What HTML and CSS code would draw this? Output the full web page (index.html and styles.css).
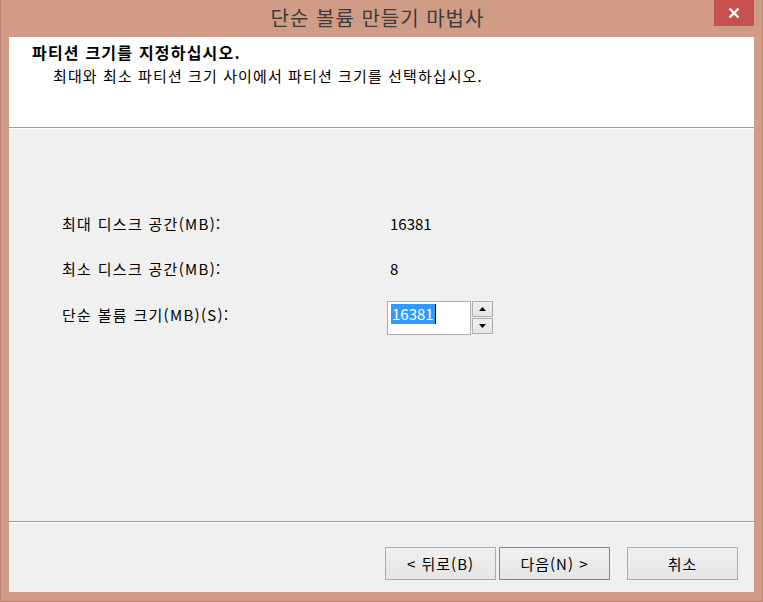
FILE: index.html
```html
<!DOCTYPE html>
<html lang="ko">
  <head>
    <meta charset="UTF-8" />
    <title>단순 볼륨 만들기 마법사</title>
    <link rel="stylesheet" href="styles.css">
  </head>
  <body>
    <div class="window">
      <div class="titlebar">
        <span></span>
        <h1 class="title">단순 볼륨 만들기 마법사</h1>
        <button class="close" aria-label="닫기">
          <svg width="12" height="12" viewBox="0 0 12 12">
            <path d="M1.5 1.5 L10.5 10.5 M10.5 1.5 L1.5 10.5" stroke="#fff" stroke-width="2.4" fill="none"/>
          </svg>
        </button>
      </div>

      <div class="client">
        <div class="header">
          <h2>파티션 크기를 지정하십시오.</h2>
          <p>최대와 최소 파티션 크기 사이에서 파티션 크기를 선택하십시오.</p>
        </div>

        <div class="content">
          <div class="fields">
            <span class="label">최대 디스크 공간(MB):</span>
            <span class="value">16381</span>

            <span class="label">최소 디스크 공간(MB):</span>
            <span class="value">8</span>

            <label class="label label-top" for="size">단순 볼륨 크기(MB)(S):</label>
            <div class="spinner">
              <div class="spin-text" id="size"><span class="selected">16381</span><span class="caret"></span></div>
              <div class="spin-buttons">
                <button class="spin-btn" aria-label="증가">
                  <svg width="7" height="4" viewBox="0 0 7 4"><path d="M0 4 L3.5 0 L7 4 Z" fill="#000"/></svg>
                </button>
                <button class="spin-btn" aria-label="감소">
                  <svg width="7" height="4" viewBox="0 0 7 4"><path d="M0 0 L3.5 4 L7 0 Z" fill="#000"/></svg>
                </button>
              </div>
            </div>
          </div>
        </div>

        <div class="footer">
          <button class="btn">&lt; 뒤로(B)</button>
          <button class="btn btn-default">다음(N) &gt;</button>
          <button class="btn btn-cancel">취소</button>
        </div>
      </div>
    </div>
  </body>
</html>
```

FILE: styles.css
```css
*{
    margin: 0;
    padding: 0;
    box-sizing: border-box;
}
body{
    font-family: "Noto Sans CJK KR", "Noto Sans", sans-serif;
    background: #cf9c87;
    color: #000;
}
.window{
    display: flex;
    flex-direction: column;
    width: 763px;
    height: 602px;
    background: #d09c86;
    border: 1px solid #b98570;
    border-top: none;
}

/* title bar */
.titlebar{
    display: grid;
    grid-template-columns: 1fr auto 1fr;
    align-items: start;
    height: 37px;
    padding-right: 8px;
}
.title{
    font-size: 20px;
    font-weight: normal;
    letter-spacing: 1px;
    color: #3b3b3b;
    line-height: 36px;
}
.close{
    justify-self: end;
    width: 40px;
    height: 26px;
    border: none;
    background: #c75050;
    display: flex;
    justify-content: center;
    align-items: center;
}

/* client area */
.client{
    flex: 1;
    display: flex;
    flex-direction: column;
    margin: 0 8px 9px 8px;
    background: #f0f0f0;
}
.header{
    height: 91px;
    background: #fff;
    padding: 5px 0 0 23px;
    border-bottom: 1px solid #a0a0a0;
}
.header h2{
    font-size: 16px;
    font-weight: bold;
    letter-spacing: 1.2px;
    line-height: 21px;
}
.header p{
    font-size: 15px;
    letter-spacing: 1.1px;
    line-height: 21px;
    padding-left: 21px;
    margin-top: 2px;
}
.content{
    flex: 1;
    border-top: 1px solid #fff;
    border-bottom: 1px solid #a0a0a0;
    padding: 82px 0 0 53px;
}
.fields{
    display: grid;
    grid-template-columns: 325px auto;
    grid-template-rows: 24px 24px 34px;
    row-gap: 21px;
    align-items: center;
    font-size: 15px;
}
.label{
    letter-spacing: 1.3px;
}
.label-top{
    align-self: start;
    padding-top: 3px;
}
.value{
    padding-left: 3px;
}

/* spin box */
.spinner{
    display: flex;
    width: 106px;
    height: 34px;
}
.spin-text{
    width: 84px;
    height: 34px;
    border: 1px solid #abadb3;
    background: #fff;
    padding: 2px 0 0 3px;
    display: flex;
    align-items: flex-start;
}
.selected{
    background: #3399ff;
    color: #fff;
    line-height: 20px;
    padding: 0 1px;
}
.caret{
    width: 1px;
    height: 20px;
    background: #000;
}
.spin-buttons{
    display: flex;
    flex-direction: column;
    width: 22px;
    padding-left: 1px;
    gap: 1px;
}
.spin-btn{
    height: 16px;
    border: 1px solid #acacac;
    background: linear-gradient(#f0f0f0, #e5e5e5);
    display: flex;
    justify-content: center;
    align-items: center;
}

/* buttons */
.footer{
    height: 70px;
    border-top: 1px solid #fff;
    display: flex;
    align-items: flex-start;
    padding: 24px 0 0 376px;
    gap: 3px;
}
.btn{
    width: 111px;
    height: 33px;
    font-family: inherit;
    font-size: 15px;
    letter-spacing: 1px;
    color: #000;
    border: 1px solid #acacac;
    background: linear-gradient(#f0f0f0, #e5e5e5);
}
.btn-default{
    border-color: #3399ff;
}
.btn-cancel{
    margin-left: 14px;
}
```
